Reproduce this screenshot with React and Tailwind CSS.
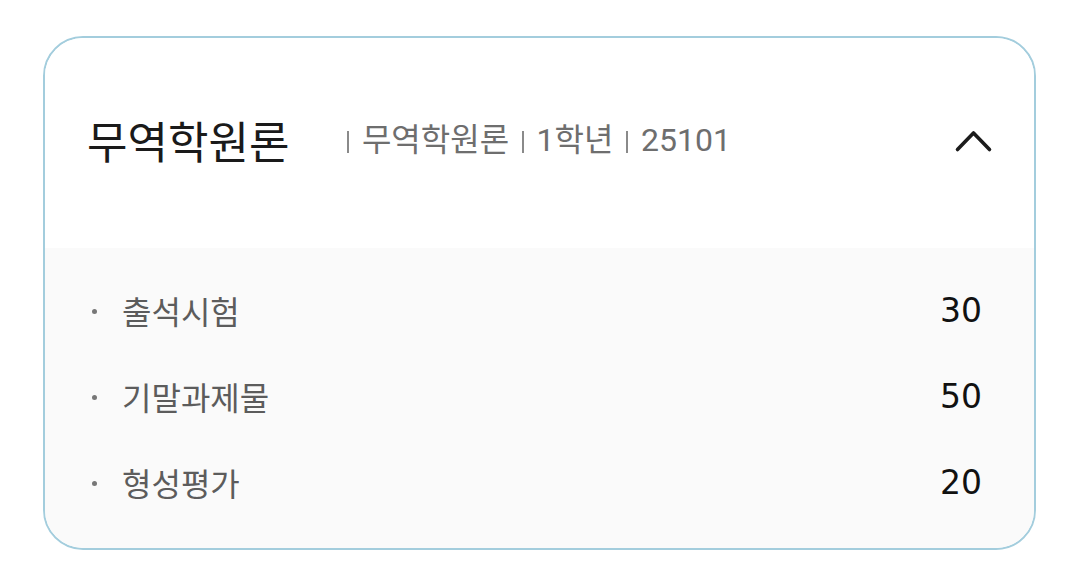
import { useState } from "react";

const items = [
  { label: "출석시험", score: 30 },
  { label: "기말과제물", score: 50 },
  { label: "형성평가", score: 20 },
];

const meta = ["무역학원론", "1학년", "25101"];

function Chevron({ open }) {
  return (
    <svg
      width="40"
      height="26"
      viewBox="0 0 40 26"
      fill="none"
      className={open ? "" : "rotate-180"}
    >
      <path
        d="M4.5 22.5 L20.5 6 L36.5 22.5"
        stroke="#1c1c1c"
        strokeWidth="3.6"
        strokeLinecap="round"
        strokeLinejoin="round"
      />
    </svg>
  );
}

export default function App() {
  const [open, setOpen] = useState(true);

  return (
    <div
      className="min-h-screen bg-white pt-[36px] px-[43px]"
      style={{ fontFamily: '"Noto Sans CJK KR", "Noto Sans", sans-serif' }}
    >
      <div className="rounded-[40px] border-2 border-[#a3cddd] overflow-hidden">
        <div className="h-[210px] bg-white flex items-center pl-[42px] pr-[41px] pb-[6px]">
          <h2 className="text-[44px] leading-none text-[#1a1a1a]">무역학원론</h2>
          <div
            className="flex items-center ml-[45px] text-[32px] text-[#6e6e6e] leading-none"
            style={{ fontFamily: 'Roboto, "Noto Sans CJK KR", sans-serif' }}
          >
            {meta.map((m) => (
              <span key={m} className="flex items-center">
                <span className="w-[1.5px] h-[22px] bg-[#8a8a8a] mx-[13px] mt-[4px]" />
                <span>{m}</span>
              </span>
            ))}
          </div>
          <button className="ml-auto" onClick={() => setOpen(!open)}>
            <Chevron open={open} />
          </button>
        </div>
        {open && (
          <ul className="bg-[#fafafa] pt-[19px] pb-[23px] pl-[47px] pr-[52px]">
            {items.map((it) => (
              <li key={it.label} className="h-[86px] flex items-center">
                <span className="w-[5px] h-[5px] rounded-full bg-[#777777] mr-[25px] mt-[3px]" />
                <span className="text-[32px] text-[#5c5c5c] leading-none">{it.label}</span>
                <span
                  className="ml-auto text-[33px] text-[#111111] leading-none"
                  style={{ fontFamily: '"DejaVu Sans", sans-serif' }}
                >
                  {it.score}
                </span>
              </li>
            ))}
          </ul>
        )}
      </div>
    </div>
  );
}
